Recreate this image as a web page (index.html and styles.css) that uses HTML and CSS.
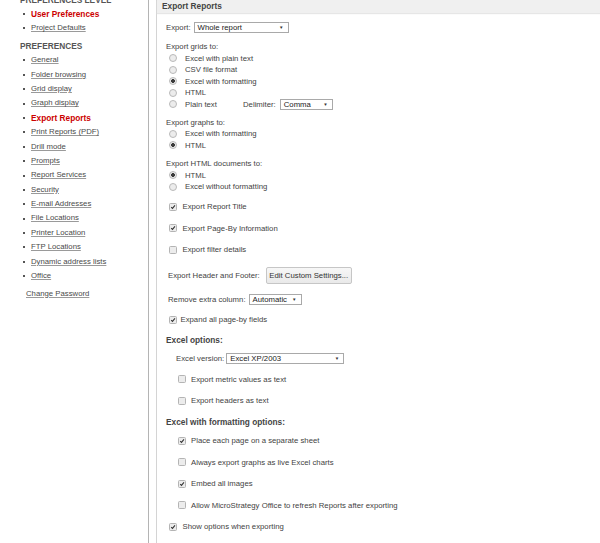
FILE: index.html
```html
<!DOCTYPE html>
<html lang="en">
<head>
    <meta charset="UTF-8">
    <title>Preferences - Export Reports</title>
    <link rel="stylesheet" href="styles.css">
</head>
<body>
    <div class="page">
        <div class="sidebar">
            <div class="side-heading top">PREFERENCES LEVEL</div>
            <ul class="side-list">
                <li class="current">User Preferences</li>
                <li><a href="#">Project Defaults</a></li>
            </ul>
            <div class="side-heading">PREFERENCES</div>
            <ul class="side-list">
                <li><a href="#">General</a></li>
                <li><a href="#">Folder browsing</a></li>
                <li><a href="#">Grid display</a></li>
                <li><a href="#">Graph display</a></li>
                <li class="current">Export Reports</li>
                <li><a href="#">Print Reports (PDF)</a></li>
                <li><a href="#">Drill mode</a></li>
                <li><a href="#">Prompts</a></li>
                <li><a href="#">Report Services</a></li>
                <li><a href="#">Security</a></li>
                <li><a href="#">E-mail Addresses</a></li>
                <li><a href="#">File Locations</a></li>
                <li><a href="#">Printer Location</a></li>
                <li><a href="#">FTP Locations</a></li>
                <li><a href="#">Dynamic address lists</a></li>
                <li><a href="#">Office</a></li>
            </ul>
            <a href="#" class="change-pw">Change Password</a>
        </div>

        <div class="main">
            <div class="main-title">Export Reports</div>
            <div class="main-body">
                <div class="row export-row">
                    <span>Export:</span>
                    <span class="select sel-export">Whole report<span class="arrow">&#9660;</span></span>
                </div>

                <div class="group-label first">Export grids to:</div>
                <div class="row radio-row"><span class="radio"></span><span>Excel with plain text</span></div>
                <div class="row radio-row"><span class="radio"></span><span>CSV file format</span></div>
                <div class="row radio-row"><span class="radio on"></span><span>Excel with formatting</span></div>
                <div class="row radio-row"><span class="radio"></span><span>HTML</span></div>
                <div class="row radio-row">
                    <span class="radio"></span><span class="plain-label">Plain text</span>
                    <span>Delimiter:</span>
                    <span class="select sel-delim">Comma<span class="arrow">&#9660;</span></span>
                </div>

                <div class="group-label">Export graphs to:</div>
                <div class="row radio-row"><span class="radio"></span><span>Excel with formatting</span></div>
                <div class="row radio-row"><span class="radio on"></span><span>HTML</span></div>

                <div class="group-label">Export HTML documents to:</div>
                <div class="row radio-row"><span class="radio on"></span><span>HTML</span></div>
                <div class="row radio-row"><span class="radio"></span><span>Excel without formatting</span></div>

                <div class="row check-row first-check"><span class="check on"><svg viewBox="0 0 8 8"><path d="M1.6 4.2 L3.3 5.9 L6.6 1.8" /></svg></span><span>Export Report Title</span></div>
                <div class="row check-row"><span class="check on"><svg viewBox="0 0 8 8"><path d="M1.6 4.2 L3.3 5.9 L6.6 1.8" /></svg></span><span>Export Page-By Information</span></div>
                <div class="row check-row"><span class="check"></span><span>Export filter details</span></div>

                <div class="row header-footer">
                    <span>Export Header and Footer:</span>
                    <button type="button" class="btn">Edit Custom Settings...</button>
                </div>

                <div class="row extra-col">
                    <span>Remove extra column:</span>
                    <span class="select sel-auto">Automatic<span class="arrow">&#9660;</span></span>
                </div>

                <div class="row check-row expand"><span class="check on"><svg viewBox="0 0 8 8"><path d="M1.6 4.2 L3.3 5.9 L6.6 1.8" /></svg></span><span>Expand all page-by fields</span></div>

                <div class="section-title">Excel options:</div>
                <div class="row version-row">
                    <span>Excel version:</span>
                    <span class="select sel-version">Excel XP/2003<span class="arrow">&#9660;</span></span>
                </div>
                <div class="row check-row sub after-select"><span class="check"></span><span>Export metric values as text</span></div>
                <div class="row check-row sub"><span class="check"></span><span>Export headers as text</span></div>

                <div class="section-title second">Excel with formatting options:</div>
                <div class="row check-row sub tight"><span class="check on"><svg viewBox="0 0 8 8"><path d="M1.6 4.2 L3.3 5.9 L6.6 1.8" /></svg></span><span>Place each page on a separate sheet</span></div>
                <div class="row check-row sub"><span class="check"></span><span>Always export graphs as live Excel charts</span></div>
                <div class="row check-row sub"><span class="check on"><svg viewBox="0 0 8 8"><path d="M1.6 4.2 L3.3 5.9 L6.6 1.8" /></svg></span><span>Embed all images</span></div>
                <div class="row check-row sub"><span class="check"></span><span>Allow MicroStrategy Office to refresh Reports after exporting</span></div>

                <div class="row check-row"><span class="check on"><svg viewBox="0 0 8 8"><path d="M1.6 4.2 L3.3 5.9 L6.6 1.8" /></svg></span><span>Show options when exporting</span></div>
            </div>
        </div>
    </div>
</body>
</html>
```

FILE: styles.css
```css
html, body {
    margin: 0;
    padding: 0;
    background: #fff;
}
body {
    font-family: "Liberation Sans", Arial, sans-serif;
    font-size: 7.75px;
    color: #3f3f3f;
    overflow: hidden;
}
.page {
    display: flex;
    align-items: stretch;
    min-height: 543px;
}

/* left navigation */
.sidebar {
    width: 148px;
    flex: none;
    border-right: 1px solid #b4b4b4;
    box-sizing: content-box;
}
.side-heading {
    font-weight: bold;
    font-size: 8.3px;
    color: #555;
    line-height: 14.4px;
    padding-left: 20px;
    margin-top: 3.1px;
}
.side-heading.top {
    margin-top: -7.5px;
}
.side-list {
    margin: 0;
    padding-left: 23px;
    list-style: none;
}
.side-list li {
    display: flex;
    align-items: center;
    line-height: 14.4px;
    height: 14.4px;
}
.side-list li::before {
    content: "";
    width: 2px;
    height: 2px;
    background: #555;
    margin-right: 6px;
    flex: none;
}
.side-list a {
    color: #4a4a4a;
    text-decoration: underline;
    text-decoration-color: #9a9a9a;
}
.side-list li.current {
    color: #cc0000;
    font-weight: bold;
    font-size: 8.3px;
}
.change-pw {
    display: block;
    margin: 3.2px 0 0 26px;
    line-height: 14.4px;
    color: #4a4a4a;
    text-decoration-color: #9a9a9a;
}

/* main panel */
.main {
    flex: 1;
    margin-left: 7px;
    border-left: 1px solid #d4d4d4;
}
.main-title {
    background: #f0f0f0;
    height: 13px;
    line-height: 12px;
    padding-left: 5px;
    font-weight: bold;
    font-size: 8.3px;
    color: #444;
    box-shadow: 0 1px 1px #e6e6e6;
}
.main-body {
    padding-left: 9px;
}
.row {
    display: flex;
    align-items: center;
    height: 11.5px;
    white-space: nowrap;
}
.group-label {
    line-height: 11.5px;
    height: 11.5px;
    margin-top: 6.7px;
}
.group-label.first {
    margin-top: 8px;
}
.section-title {
    font-weight: bold;
    font-size: 8.3px;
    color: #444;
    line-height: 12px;
    height: 12px;
    margin-top: 8.3px;
}
.section-title.second {
    margin-top: 9.5px;
}

/* fake select boxes */
.select {
    display: inline-flex;
    align-items: center;
    justify-content: space-between;
    box-sizing: border-box;
    height: 11px;
    border: 1px solid #a9a9a9;
    background: #fff;
    padding: 0 4px 0 3px;
    color: #222;
}
.arrow {
    font-size: 4.5px;
    color: #333;
}
.export-row {
    margin-top: 9px;
    height: 11px;
}
.sel-export {
    width: 95px;
    margin-left: 3px;
}
.plain-label {
    width: 58px;
}
.sel-delim {
    width: 53px;
    margin-left: 4px;
}

/* radio buttons */
.radio-row {
    padding-left: 2.5px;
}
.radio {
    width: 8px;
    height: 8px;
    box-sizing: border-box;
    border: 1px solid #b9b9b9;
    border-radius: 50%;
    background: #ececec;
    margin-right: 8.5px;
    flex: none;
}
.radio.on {
    background: radial-gradient(circle, #3c3c3c 0, #3c3c3c 1.6px, #ececec 2.2px);
}

/* checkboxes */
.check-row {
    margin-top: 10px;
    padding-left: 2.5px;
}
.check-row.first-check {
    margin-top: 8.8px;
}
.check {
    width: 8px;
    height: 8px;
    box-sizing: border-box;
    border: 1px solid #b4b4b4;
    border-radius: 1.5px;
    background: #ececec;
    margin-right: 6px;
    flex: none;
    display: flex;
}
.check svg {
    width: 100%;
    height: 100%;
    overflow: visible;
}
.check path {
    fill: none;
    stroke: #333;
    stroke-width: 1.4;
}
.check-row.sub {
    padding-left: 12px;
}
.check-row.sub .check {
    margin-right: 5px;
}
.check-row.after-select {
    margin-top: 9px;
}
.check-row.tight {
    margin-top: 7px;
}
.check-row.expand {
    margin-top: 9.5px;
}
.check-row.expand .check {
    margin-right: 4px;
}

/* header / footer, extra column, version */
.header-footer {
    margin-top: 11.5px;
    height: 17px;
    padding-left: 2px;
}
.btn {
    margin-left: 6px;
    height: 17px;
    width: 86px;
    padding: 0;
    font-family: inherit;
    font-size: 7.75px;
    color: #333;
    background: linear-gradient(#f7f7f7, #e9e9e9);
    border: 1px solid #c6c6c6;
    border-radius: 2px;
}
.extra-col {
    margin-top: 9.5px;
    height: 11px;
    padding-left: 2px;
}
.sel-auto {
    width: 53px;
    margin-left: 3px;
}
.version-row {
    margin-top: 7.3px;
    height: 11px;
    padding-left: 10px;
}
.sel-version {
    width: 118px;
    margin-left: 2px;
}
```
